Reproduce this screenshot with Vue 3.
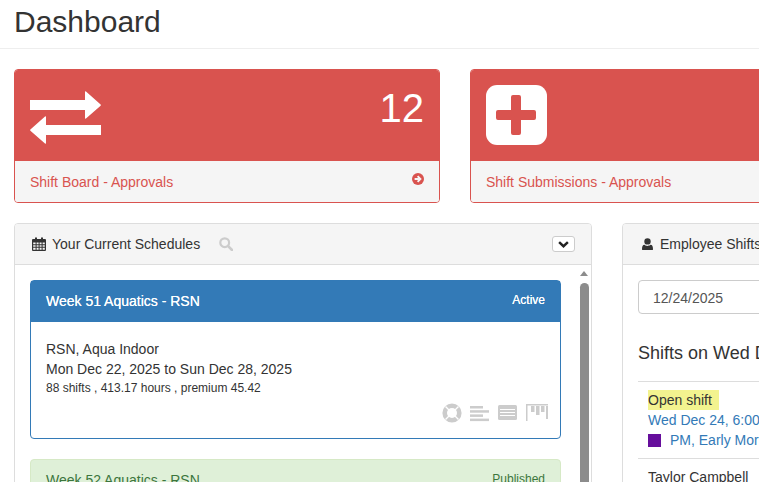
<script setup>
const stats = [
  { id: 'board', label: 'Shift Board - Approvals', count: '12', icon: 'exchange', arrow: true },
  { id: 'subs', label: 'Shift Submissions - Approvals', count: '', icon: 'plus', arrow: false }
]
</script>

<template>
  <div class="page">
    <header class="page-head"><h1>Dashboard</h1></header>

    <section class="row stats">
      <article v-for="s in stats" :key="s.id" class="stat">
        <div class="stat-top">
          <svg v-if="s.icon === 'exchange'" class="stat-icon exchange" width="71" height="53" viewBox="0 0 71 53" fill="#fff">
            <path d="M0 9h55V1q0-1 1-.6l14.600 13.100q.6.6 0 1.200L56 27.600q-1 .6-1-.6v-8H0z" />
            <path d="M71 34H16v-8q0-1-1-.6L.4 38.500q-.6.6 0 1.200L15 52.600q1 .6 1-.6v-8h55z" />
          </svg>
          <svg v-else class="stat-icon" width="61" height="60" viewBox="0 0 61 60">
            <rect width="61" height="60" rx="11" fill="#fff" />
            <path d="M25 12a2 2 0 0 1 2-2h6a2 2 0 0 1 2 2v13h13a2 2 0 0 1 2 2v6a2 2 0 0 1-2 2H35v13a2 2 0 0 1-2 2h-6a2 2 0 0 1-2-2V35H12a2 2 0 0 1-2-2v-6a2 2 0 0 1 2-2h13z" fill="#d9534f" />
          </svg>
          <span class="count">{{ s.count }}</span>
        </div>
        <div class="stat-foot">
          <span>{{ s.label }}</span>
          <svg v-if="s.arrow" width="12" height="12" viewBox="0 0 12 12">
            <circle cx="6" cy="6" r="6" fill="#d9534f" />
            <path d="M2.600 6h5.400M5.600 3.200 8.400 6 5.600 8.800" fill="none" stroke="#f5f5f5" stroke-width="1.900" />
          </svg>
        </div>
      </article>
    </section>

    <section class="row panels">
      <article class="panel">
        <div class="panel-head">
          <svg width="14" height="14" viewBox="0 0 14 14" fill="#333">
            <path fill-rule="evenodd" d="M1 2h2V.5h2V2h4V.5h2V2h2a1 1 0 0 1 1 1v10a1 1 0 0 1-1 1H1a1 1 0 0 1-1-1V3a1 1 0 0 1 1-1zm.2 3.600v1.600h2.400V5.600zm3.400 0v1.600h2V5.600zm3 0v1.600h2V5.600zm3 0v1.600h2.200V5.600zM1.200 8.200v1.600h2.400V8.200zm3.400 0v1.600h2V8.200zm3 0v1.600h2V8.200zm3 0v1.600h2.200V8.200zM1.200 10.800v2h2.400v-2zm3.400 0v2h2v-2zm3 0v2h2v-2zm3 0v2h2.200v-2z" />
          </svg>
          <span class="head-title">Your Current Schedules</span>
          <svg class="search" width="14" height="14" viewBox="0 0 14 14" fill="none" stroke="#ccc">
            <circle cx="5.700" cy="5.700" r="4.400" stroke-width="2.200" />
            <path d="M8.900 8.900 13 13" stroke-width="2.600" stroke-linecap="round" />
          </svg>
          <button class="toggle" type="button">
            <svg width="11" height="7" viewBox="0 0 12 8" fill="none" stroke="#222" stroke-width="2.800">
              <path d="M1 1.300 6 6l5-4.700" />
            </svg>
          </button>
        </div>
        <div class="panel-body">
          <div class="cards">
            <div class="week active">
              <div class="week-head"><span class="week-title">Week 51 Aquatics - RSN</span><small>Active</small></div>
              <div class="week-body">
                <p>RSN, Aqua Indoor</p>
                <p>Mon Dec 22, 2025 to Sun Dec 28, 2025</p>
                <p class="meta">88 shifts , 413.17 hours , premium 45.42</p>
                <div class="tools">
                  <svg width="20" height="20" viewBox="0 0 20 20">
                    <circle cx="10" cy="10" r="7.300" fill="none" stroke="#ccc" stroke-width="4.600" />
                    <path d="M3.500 3.500 7 7M16.500 3.500 13 7M3.500 16.500 7 13M16.500 16.500 13 13" stroke="#fff" stroke-width="1.400" />
                  </svg>
                  <svg width="20" height="20" viewBox="0 0 20 20" fill="#ccc">
                    <rect y="3" width="13" height="2.500" /><rect y="7.200" width="19" height="2.500" /><rect y="11.400" width="13" height="2.500" /><rect y="15.600" width="19" height="2.500" />
                  </svg>
                  <svg width="20" height="20" viewBox="0 0 20 20">
                    <rect y="2" width="19" height="15" rx="1.500" fill="#ccc" />
                    <path d="M2 6.500h15M2 9.500h15M2 12.500h15" stroke="#fff" stroke-width="1.100" />
                  </svg>
                  <svg width="22" height="20" viewBox="0 0 22 20" fill="#ccc">
                    <rect y="1" width="22" height="1.500" /><rect y="1" width="1.500" height="17" /><rect x="5" y="3" width="3.500" height="6" /><rect x="10" y="3" width="3.500" height="9" /><rect x="15" y="3" width="3.500" height="6" /><rect x="20" y="3" width="2" height="13" />
                  </svg>
                </div>
              </div>
            </div>
            <div class="week published">
              <div class="week-head"><span class="week-title">Week 52 Aquatics - RSN</span><small>Published</small></div>
            </div>
          </div>
          <div class="scrollbar" aria-hidden="true">
            <i class="arrow"></i>
            <i class="thumb"></i>
          </div>
        </div>
      </article>

      <article class="panel">
        <div class="panel-head">
          <svg class="person" width="11" height="13" viewBox="0 0 12 14" fill="#333">
            <circle cx="6" cy="3.600" r="3.500" />
            <path d="M.5 13a.9.9 0 0 1-.5-.9C0 9.500.7 7.300 2.700 7.300c1 .9 2 1.300 3.300 1.300s2.300-.4 3.300-1.300c2 0 2.700 2.200 2.700 4.800a.9.9 0 0 1-.5.9z" />
          </svg>
          <span class="head-title wide">Employee Shifts</span>
        </div>
        <div class="panel-body column">
          <div class="date-input">12/24/2025</div>
          <h2>Shifts on Wed Dec 24, 2025</h2>
          <ul class="shifts">
            <li>
              <mark>Open shift</mark>
              <a>Wed Dec 24, 6:00 AM - 2:00 PM</a>
              <a class="role"><i class="swatch"></i>PM, Early Morning</a>
            </li>
            <li>Taylor Campbell</li>
          </ul>
        </div>
      </article>
    </section>
  </div>
</template>

<style scoped>
* { box-sizing: border-box; }
.page {
  width: 759px;
  height: 482px;
  overflow: hidden;
  font-family: "Liberation Sans", Arial, sans-serif;
  font-size: 14px;
  line-height: 20px;
  color: #333;
  background: #fff;
}
.page-head {
  height: 49px;
  padding-left: 14px;
  border-bottom: 1px solid #eee;
}
h1 {
  margin: 0;
  font-size: 30px;
  font-weight: 400;
  line-height: 44px;
}
.row {
  display: flex;
  gap: 30px;
  padding-left: 14px;
}
.stats { padding-top: 20px; }
.stat {
  flex: 0 0 426px;
  height: 134px;
  display: flex;
  flex-direction: column;
  border: 1px solid #d9534f;
  border-radius: 4px;
  overflow: hidden;
}
.stat-top {
  height: 91px;
  display: flex;
  align-items: flex-start;
  justify-content: space-between;
  padding: 15px 15px 0;
  background: #d9534f;
  color: #fff;
}
.stat-icon { flex: none; }
.exchange { margin-top: 6px; }
.count {
  font-size: 40px;
  line-height: 44px;
  margin-top: 1px;
}
.stat-foot {
  flex: 1;
  display: flex;
  justify-content: space-between;
  padding: 11px 15px 9px;
  background: #f5f5f5;
  color: #d9534f;
}
.stat-foot svg { margin-top: 1px; }
.panels { padding-top: 20px; }
.panel {
  flex: 0 0 578px;
  height: 300px;
  border: 1px solid #ddd;
  border-radius: 4px;
}
.panel-head {
  height: 41px;
  display: flex;
  align-items: center;
  padding: 0 16px 0 17px;
  background: #f5f5f5;
  border-bottom: 1px solid #ddd;
  border-radius: 3px 3px 0 0;
  white-space: nowrap;
}
.head-title { margin-left: 6px; }
.head-title.wide { margin-left: 7px; }
.person { margin-left: 2px; }
.search { margin-left: 19px; }
.toggle {
  margin-left: auto;
  width: 23px;
  height: 16px;
  padding: 0;
  display: flex;
  align-items: center;
  justify-content: center;
  background: #fff;
  border: 1px solid #ccc;
  border-radius: 3px;
}
.panel-body {
  display: flex;
  padding: 15px 0 0 15px;
}
.column {
  display: block;
  padding-right: 15px;
  white-space: nowrap;
}
.cards {
  width: 531px;
  flex: none;
}
.week {
  border: 1px solid;
  border-radius: 4px;
  margin-bottom: 20px;
}
.week-head {
  display: flex;
  justify-content: space-between;
  height: 41px;
  padding: 10px 15px;
}
.week-head small {
  font-size: 12px;
  line-height: 18px;
}
.active { border-color: #337ab7; height: 159px; }
.active .week-head {
  background: #337ab7;
  color: #fff;
  text-shadow: 0 0 .6px #fff;
}
.week-body { padding: 17px 15px 0; }
.week-body p { margin: 0; }
.week-body .meta { font-size: 12px; line-height: 18px; }
.tools {
  display: flex;
  justify-content: flex-end;
  gap: 8px;
  margin: 6px -3px 0 0;
}
.published {
  background: #dff0d8;
  border-color: #d6e9c6;
  color: #3c763d;
}
.scrollbar {
  margin-left: 18px;
  width: 10px;
  display: flex;
  flex-direction: column;
  align-items: center;
}
.arrow {
  width: 0;
  height: 0;
  margin-top: -9px;
  border: 4.500px solid transparent;
  border-top: 0;
  border-bottom: 5px solid #8c8c8c;
}
.thumb {
  width: 9px;
  height: 300px;
  margin-top: 7px;
  border-radius: 5px;
  background: #8c8c8c;
  flex: none;
}
.date-input {
  height: 34px;
  padding: 7px 14px 5px;
  width: 500px;
  border: 1px solid #ccc;
  border-radius: 4px;
  color: #555;
}
h2 {
  margin: 29px 0 18px;
  font-size: 18px;
  font-weight: 400;
  line-height: 20px;
}
.shifts {
  margin: 0;
  padding: 0;
  list-style: none;
}
.shifts li {
  padding: 8px 10px;
  border-top: 1px solid #ddd;
}
mark {
  display: block;
  width: fit-content;
  padding-right: 7px;
  background: #f3f38f;
  color: #333;
}
a {
  display: block;
  color: #337ab7;
}
.role {
  display: flex;
  align-items: center;
}
.swatch {
  width: 13px;
  height: 13px;
  margin-right: 9px;
  background: #660e9c;
}
</style>

<style>
html, body { overflow: hidden; }
</style>
